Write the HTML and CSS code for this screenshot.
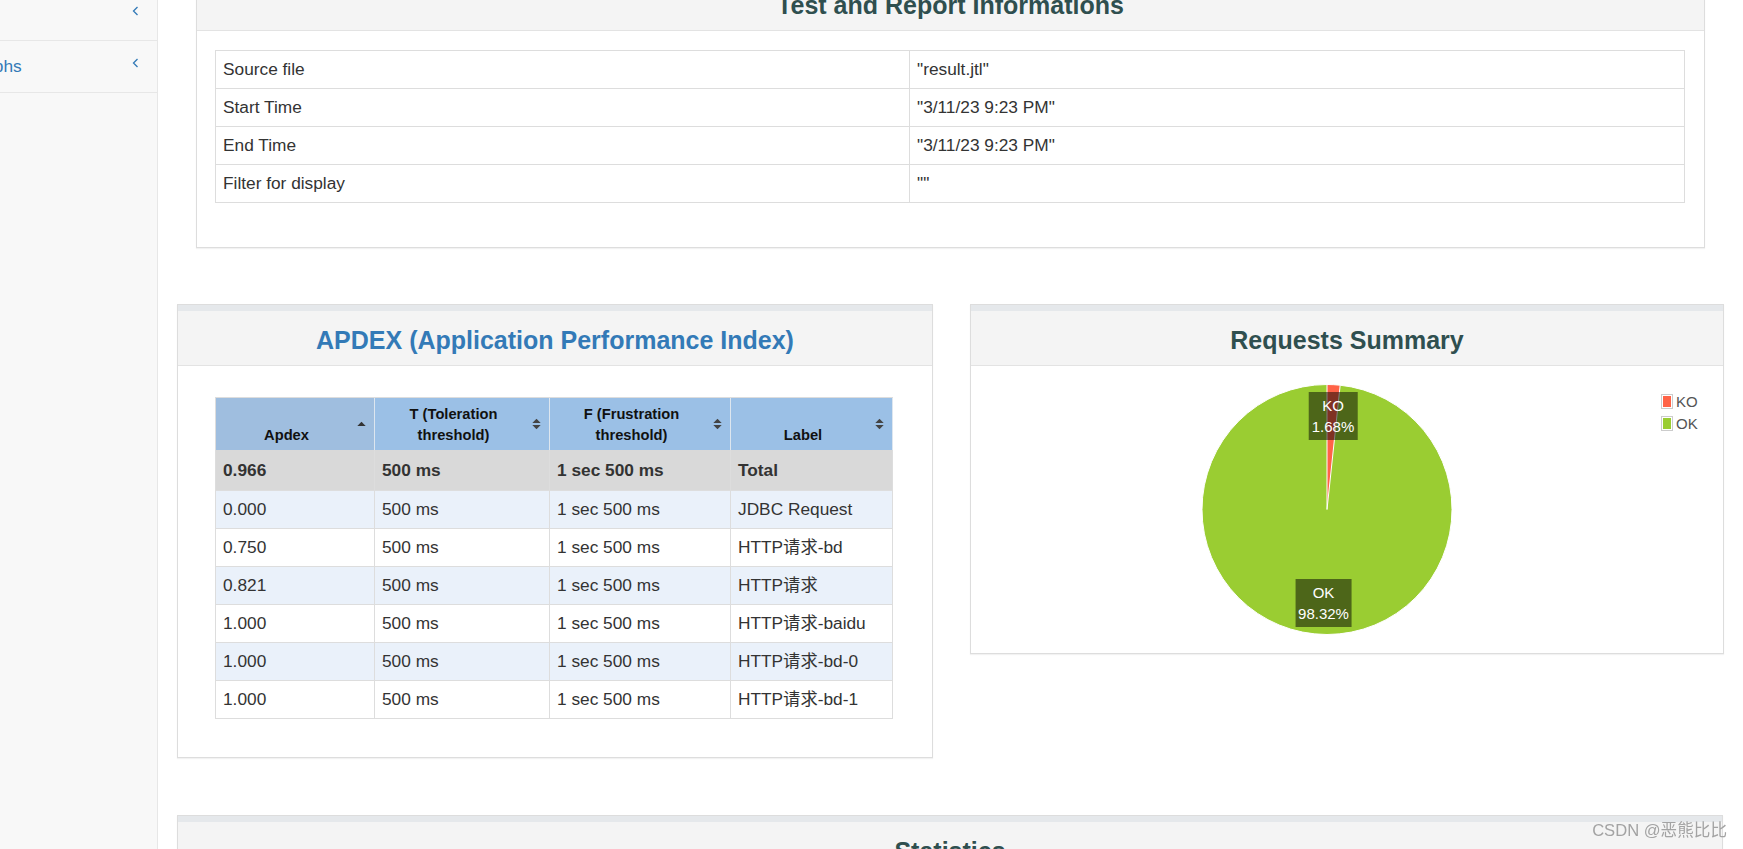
FILE: index.html
```html
<!DOCTYPE html>
<html lang="en">
<head>
<meta charset="utf-8">
<title>Dashboard</title>
<link rel="stylesheet" href="styles.css">
</head>
<body>
<div class="layout">
  <nav class="sidebar">
    <ul class="side-nav">
      <li class="side-item">
        <span class="side-label"></span>
        <svg class="chev" width="7" height="10" viewBox="0 0 7 10"><polyline points="5.5,1 1.5,5 5.5,9" fill="none" stroke="#337ab7" stroke-width="1.3"/></svg>
      </li>
      <li class="side-item">
        <span class="side-label graphs">Graphs</span>
        <svg class="chev" width="7" height="10" viewBox="0 0 7 10"><polyline points="5.5,1 1.5,5 5.5,9" fill="none" stroke="#337ab7" stroke-width="1.3"/></svg>
      </li>
    </ul>
  </nav>

  <main class="page">
    <section class="panel panel-top">
      <div class="panel-heading heading-top">
        <p class="dashboard-title">Test and Report Informations</p>
      </div>
      <div class="info-body">
        <table class="info-table">
          <colgroup><col class="info-key"><col></colgroup>
          <tbody>
            <tr><td>Source file</td><td>"result.jtl"</td></tr>
            <tr><td>Start Time</td><td>"3/11/23 9:23 PM"</td></tr>
            <tr><td>End Time</td><td>"3/11/23 9:23 PM"</td></tr>
            <tr><td>Filter for display</td><td>""</td></tr>
          </tbody>
        </table>
      </div>
    </section>

    <div class="row2">
      <section class="panel">
        <div class="panel-heading">
          <p class="dashboard-title title-link">APDEX (Application Performance Index)</p>
        </div>
        <div class="apdex-body">
          <table class="apdex-table">
            <colgroup><col class="c1"><col class="c2"><col class="c3"><col class="c4"></colgroup>
            <thead>
              <tr>
                <th class="sorted">Apdex<svg class="sort" width="9" height="11" viewBox="0 0 9 11"><path d="M4.5 3.2 L8.7 7.6 H0.3 Z" fill="#333"/></svg></th>
                <th>T (Toleration threshold)<svg class="sort" width="9" height="11" viewBox="0 0 9 11"><path d="M4.5 0.2 L8.7 4.6 H0.3 Z M4.5 10.8 L8.7 6.4 H0.3 Z" fill="#444"/></svg></th>
                <th>F (Frustration threshold)<svg class="sort" width="9" height="11" viewBox="0 0 9 11"><path d="M4.5 0.2 L8.7 4.6 H0.3 Z M4.5 10.8 L8.7 6.4 H0.3 Z" fill="#444"/></svg></th>
                <th>Label<svg class="sort" width="9" height="11" viewBox="0 0 9 11"><path d="M4.5 0.2 L8.7 4.6 H0.3 Z M4.5 10.8 L8.7 6.4 H0.3 Z" fill="#444"/></svg></th>
              </tr>
            </thead>
            <tbody>
              <tr class="total"><td>0.966</td><td>500 ms</td><td>1 sec 500 ms</td><td>Total</td></tr>
              <tr class="odd"><td>0.000</td><td>500 ms</td><td>1 sec 500 ms</td><td>JDBC Request</td></tr>
              <tr><td>0.750</td><td>500 ms</td><td>1 sec 500 ms</td><td>HTTP请求-bd</td></tr>
              <tr class="odd"><td>0.821</td><td>500 ms</td><td>1 sec 500 ms</td><td>HTTP请求</td></tr>
              <tr><td>1.000</td><td>500 ms</td><td>1 sec 500 ms</td><td>HTTP请求-baidu</td></tr>
              <tr class="odd"><td>1.000</td><td>500 ms</td><td>1 sec 500 ms</td><td>HTTP请求-bd-0</td></tr>
              <tr><td>1.000</td><td>500 ms</td><td>1 sec 500 ms</td><td>HTTP请求-bd-1</td></tr>
            </tbody>
          </table>
        </div>
      </section>

      <section class="panel">
        <div class="panel-heading">
          <p class="dashboard-title">Requests Summary</p>
        </div>
        <div class="chart-body">
          <svg class="pie" width="752" height="287" viewBox="0 0 752 287">
            <circle cx="356" cy="143.5" r="125" fill="#9acd32" stroke="#ffffff" stroke-width="1"/>
            <path d="M356 143.5 L356 18.5 A125 125 0 0 1 369.17 19.2 Z" fill="#ff6347" stroke="#ffffff" stroke-width="1"/>
          </svg>
          <div class="pie-label ko-label">KO<br>1.68%</div>
          <div class="pie-label ok-label">OK<br>98.32%</div>
          <div class="legend">
            <div class="legend-row"><span class="swatch"><span class="swatch-in ko"></span></span><span class="legend-text">KO</span></div>
            <div class="legend-row"><span class="swatch"><span class="swatch-in ok"></span></span><span class="legend-text">OK</span></div>
          </div>
        </div>
      </section>
    </div>

    <section class="panel stats">
      <div class="panel-heading">
        <p class="dashboard-title">Statistics</p>
      </div>
      <div class="stats-body"></div>
    </section>
  </main>
</div>
<div class="watermark">CSDN @恶熊比比</div>
</body>
</html>
```

FILE: styles.css
```css
html, body {
  margin: 0;
  padding: 0;
}

body {
  font-family: "Liberation Sans", Arial, "Noto Sans CJK SC", sans-serif;
  color: #333;
  background: #fff;
  height: 100vh;
  overflow: hidden;
}

.layout {
  display: flex;
  min-height: 100vh;
}

/* Sidebar */
.sidebar {
  width: 158px;
  flex: none;
  box-sizing: border-box;
  background: #f8f8f8;
  border-right: 1px solid #e7e7e7;
  overflow: hidden;
}

.side-nav {
  list-style: none;
  margin: -11px 0 0;
  padding: 0;
}

.side-item {
  height: 51px;
  border-bottom: 1px solid #e7e7e7;
  display: flex;
  align-items: center;
  justify-content: space-between;
  padding-right: 18px;
  font-size: 17.3px;
  color: #337ab7;
  white-space: nowrap;
}

.side-label.graphs {
  margin-left: -35px;
}

.chev {
  margin-top: -7px;
}

/* Main page */
.page {
  flex: 1;
  min-width: 0;
  margin-top: -31px;
  padding: 0 20px 0 19px;
}

.panel {
  background: #fff;
  border: 1px solid #dddddd;
  box-shadow: 0 1px 1px rgba(0, 0, 0, 0.05);
}

.panel-heading {
  box-sizing: border-box;
  background: #f4f4f4;
  border-top: 6px solid #e5e8eb;
  border-bottom: 1px solid #e3e3e3;
  height: 61px;
  padding-top: 4px;
  display: flex;
  align-items: center;
  justify-content: center;
}

.heading-top {
  padding-top: 3px;
}

.dashboard-title {
  margin: 0;
  font-size: 25px;
  line-height: 30px;
  font-weight: bold;
  color: #2f4f4f;
}

.title-link {
  color: #337ab7;
}

.panel-top {
  margin: 0 18px 0 19px;
}

.info-body {
  padding: 19px 19px 44px 18px;
}

.info-table {
  width: 100%;
  table-layout: fixed;
  border-collapse: separate;
  border-spacing: 0;
  border-top: 1px solid #ddd;
  border-left: 1px solid #ddd;
  font-size: 17.3px;
}

.info-key {
  width: 694px;
}

.info-table td {
  padding: 8px 7px;
  line-height: 21px;
  border-right: 1px solid #ddd;
  border-bottom: 1px solid #ddd;
}

.row2 {
  display: grid;
  grid-template-columns: 1fr 1fr;
  column-gap: 37px;
  margin-top: 56px;
  align-items: start;
}

/* APDEX */
.apdex-body {
  padding: 31px 39px 38px 37px;
}

.apdex-table {
  width: 677px;
  table-layout: fixed;
  border-collapse: separate;
  border-spacing: 0;
  border-top: 1px solid #ddd;
  border-left: 1px solid #ddd;
  font-size: 17.3px;
}

.c1 { width: 159px; }
.c2 { width: 175px; }
.c3 { width: 181px; }
.c4 { width: 162px; }

.apdex-table th {
  position: relative;
  background: #9bc0e6;
  color: #111;
  font-size: 14.7px;
  font-weight: bold;
  line-height: 21px;
  padding: 6px 25px 4px 8px;
  text-align: center;
  vertical-align: bottom;
  border-right: 1px solid #dde6ef;
}

.apdex-table th.sorted {
  background: #9fbedf;
}

.sort {
  position: absolute;
  right: 8px;
  top: 50%;
  transform: translateY(-50%);
}

.apdex-table td {
  padding: 8px 7px;
  line-height: 21px;
  border-right: 1px solid #ddd;
  border-bottom: 1px solid #ddd;
  white-space: nowrap;
}

.apdex-table tr.total td {
  background: #d9d9d9;
  font-weight: bold;
  padding-top: 10px;
  padding-bottom: 9px;
}

.apdex-table tr.odd td {
  background: #eaf1fa;
}

/* Requests summary chart */
.chart-body {
  position: relative;
  height: 287px;
}

.pie {
  display: block;
}

.pie-label {
  position: absolute;
  transform: translate(-50%, -50%);
  background: rgba(0, 0, 0, 0.5);
  color: #fff;
  font-size: 15px;
  line-height: 21px;
  padding: 3px 3px;
  text-align: center;
  white-space: nowrap;
}

.ko-label {
  left: 362px;
  top: 50px;
}

.ok-label {
  left: 352.5px;
  top: 237px;
}

.legend {
  position: absolute;
  left: 690px;
  top: 24px;
  font-size: 15px;
  color: #545454;
}

.legend-row {
  display: flex;
  align-items: center;
  height: 22px;
}

.swatch {
  display: block;
  border: 1px solid #ccc;
  padding: 1px;
}

.swatch-in {
  display: block;
  width: 8px;
  height: 11px;
}

.swatch-in.ko { background: #ff6347; }
.swatch-in.ok { background: #9acd32; }

.legend-text {
  margin-left: 3px;
}

/* Statistics */
.stats {
  margin-top: 57px;
}

.stats-body {
  height: 300px;
}

.watermark {
  position: fixed;
  right: 16px;
  bottom: 9px;
  font-size: 16.6px;
  line-height: 18px;
  color: #a3a3a3;
  font-family: "Liberation Sans", "Noto Sans CJK SC", sans-serif;
}
```
